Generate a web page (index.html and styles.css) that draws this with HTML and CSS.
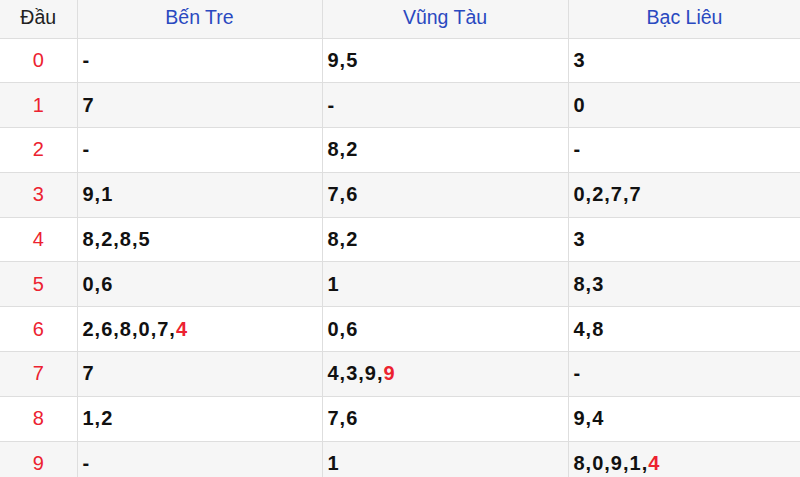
FILE: index.html
```
<!DOCTYPE html>
<html lang="vi">
<head>
<meta charset="utf-8">
<link rel="stylesheet" href="styles.css">
</head>
<body>
<table class="loto">
  <colgroup>
    <col class="c-head"><col class="c-a"><col class="c-b"><col class="c-c">
  </colgroup>
  <thead>
    <tr><th class="dau">Đầu</th><th>Bến Tre</th><th>Vũng Tàu</th><th>Bạc Liêu</th></tr>
  </thead>
  <tbody>
    <tr><td class="num">0</td><td>-</td><td>9,5</td><td>3</td></tr>
    <tr><td class="num">1</td><td>7</td><td>-</td><td>0</td></tr>
    <tr><td class="num">2</td><td>-</td><td>8,2</td><td>-</td></tr>
    <tr><td class="num">3</td><td>9,1</td><td>7,6</td><td>0,2,7,7</td></tr>
    <tr><td class="num">4</td><td>8,2,8,5</td><td>8,2</td><td>3</td></tr>
    <tr><td class="num">5</td><td>0,6</td><td>1</td><td>8,3</td></tr>
    <tr><td class="num">6</td><td>2,6,8,0,7,<span class="hl">4</span></td><td>0,6</td><td>4,8</td></tr>
    <tr><td class="num">7</td><td>7</td><td>4,3,9,<span class="hl">9</span></td><td>-</td></tr>
    <tr><td class="num">8</td><td>1,2</td><td>7,6</td><td>9,4</td></tr>
    <tr><td class="num">9</td><td>-</td><td>1</td><td>8,0,9,1,<span class="hl">4</span></td></tr>
  </tbody>
</table>
</body>
</html>
```
FILE: styles.css
```
html, body {
  margin: 0;
  padding: 0;
  background: #fff;
  overflow: hidden;
}
.loto {
  border-collapse: collapse;
  table-layout: fixed;
  width: 801px;
  font-family: "Liberation Sans", Arial, sans-serif;
  font-size: 20px;
}
.c-head { width: 77px; }
.c-a { width: 245px; }
.c-b { width: 246px; }
.c-c { width: 233px; }
.loto th, .loto td {
  border: 1px solid #dedede;
  padding: 0 5px;
}
.loto tr > :first-child { border-left: none; }
.loto thead tr:first-child > * { border-top: none; }
.loto th {
  height: 38px;
  box-sizing: border-box;
  background: #f6f6f6;
  font-weight: normal;
  font-size: 19.5px;
  color: #2a49c0;
  text-align: center;
  padding-bottom: 2px;
}
.loto th.dau { color: #222; }
.loto td {
  height: 44.8px;
  box-sizing: border-box;
  font-weight: bold;
  color: #111;
  letter-spacing: 1px;
}
.loto tbody tr:nth-child(even) td { background: #f6f6f6; }
.loto td.num {
  text-align: center;
  font-weight: normal;
  letter-spacing: 0;
  color: #ec2230;
}
.hl { color: #ec2230; }
```
